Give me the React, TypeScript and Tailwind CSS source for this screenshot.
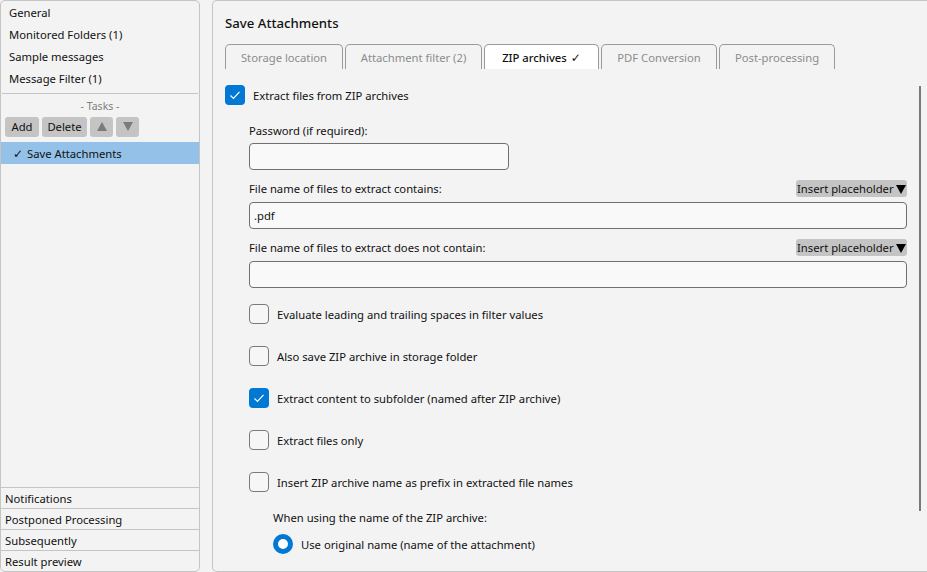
const font = 'font-["Noto_Sans","Open_Sans",sans-serif]';

function Check({ checked }: { checked?: boolean }) {
  if (checked) {
    return (
      <span className="flex h-5 w-5 shrink-0 items-center justify-center rounded-[4px] bg-[#0078d4]">
        <svg width="12" height="12" viewBox="0 0 12 12" fill="none" stroke="white" strokeWidth="1.2">
          <path d="M1.5 6.5 L4.5 9.5 L10.5 2.8" />
        </svg>
      </span>
    );
  }
  return <span className="h-5 w-5 shrink-0 rounded-[4px] border border-[#7a7a7a] bg-[#f6f6f6]" />;
}

function CheckRow({ label, checked, className }: { label: string; checked?: boolean; className?: string }) {
  return (
    <div className={`flex h-5 items-center gap-2 ${className ?? ''}`}>
      <Check checked={checked} />
      <span className="pt-[2px]">{label}</span>
    </div>
  );
}

function Field({ label, value, className }: { label: string; value?: string; className?: string }) {
  return (
    <div className={className}>
      <div className="flex h-[17px] items-center justify-between">
        <span className="pt-[1px]">{label}</span>
        <span className="flex h-[17px] w-[111px] items-center justify-between whitespace-nowrap rounded-[3px] bg-[#c4c4c4] px-[1px]">
          <span className="pt-[1px]">Insert placeholder</span>
          <svg className="mt-[1px]" width="10" height="9" viewBox="0 0 10 9" fill="#000">
            <path d="M0 0 H10 L5 9 Z" />
          </svg>
        </span>
      </div>
      <div className="mt-[5px] flex h-[27px] items-center rounded-[4px] border border-[#707070] bg-[#f9f9f9] px-[4px]">
        {value}
      </div>
    </div>
  );
}

function Tab({ label, width, active, check }: { label: string; width: string; active?: boolean; check?: boolean }) {
  return (
    <div
      className={`flex h-[25px] items-center justify-center gap-[4px] rounded-t-[5px] border border-b-0 border-[#9a9a9a] pt-[2px] ${width} ${
        active ? 'bg-white font-medium text-[#111]' : 'bg-[#f3f3f3] text-[#8c8c8c]'
      }`}
    >
      {label}
      {check && <span className='font-["DejaVu_Sans"] text-[12px]'>✓</span>}
    </div>
  );
}

const topItems = ['General', 'Monitored Folders (1)', 'Sample messages', 'Message Filter (1)'];
const bottomItems = ['Notifications', 'Postponed Processing', 'Subsequently', 'Result preview'];

export default function App() {
  return (
    <div className={`flex h-[572px] w-[927px] gap-3 overflow-hidden bg-[#f3f3f3] text-[11.25px] leading-none text-[#111] ${font}`}>
      {/* sidebar */}
      <aside className="flex h-[572px] w-[200px] shrink-0 flex-col rounded-[5px] border border-[#c4c4c4]">
        <div className="mx-[1px] border-b border-[#c4c4c4] pb-[3px] pl-[7px] pt-[1px]">
          {topItems.map((item) => (
            <div key={item} className="flex h-[22px] items-center">
              {item}
            </div>
          ))}
        </div>
        <div className="mt-[7px] text-center text-[10.5px] text-[#808080]">- Tasks -</div>
        <div className="mt-[5px] flex gap-[3px] pl-[4px]">
          <button className="h-5 w-[34px] rounded-[3px] bg-[#c4c4c4] pt-[1px]">Add</button>
          <button className="h-5 w-[45px] rounded-[3px] bg-[#c4c4c4] pt-[1px]">Delete</button>
          <button className="flex h-5 w-[23px] items-center justify-center rounded-[3px] bg-[#c4c4c4]">
            <svg width="10" height="9" viewBox="0 0 10 9" fill="#7b7b7b">
              <path d="M5 0 L10 9 H0 Z" />
            </svg>
          </button>
          <button className="flex h-5 w-[23px] items-center justify-center rounded-[3px] bg-[#c4c4c4]">
            <svg width="10" height="9" viewBox="0 0 10 9" fill="#7b7b7b">
              <path d="M0 0 H10 L5 9 Z" />
            </svg>
          </button>
        </div>
        <div className="mt-[5px] flex h-[22px] items-center gap-[5px] bg-[#93c1e8] pl-[12px] pt-[2px]">
          <span className='w-[9px] font-["DejaVu_Sans"] text-[12px]'>✓</span>
          <span>Save Attachments</span>
        </div>
        <div className="mt-auto">
          {bottomItems.map((item) => (
            <div key={item} className="flex h-[21px] items-center border-t border-[#c4c4c4] pl-[4px] pt-[2px]">
              {item}
            </div>
          ))}
        </div>
      </aside>

      {/* main panel */}
      <main className="h-[572px] flex-1 rounded-l-[5px] border border-r-0 border-[#c4c4c4] pl-3">
        <h1 className="mt-[14px] flex h-[16px] items-center pt-[1px] text-[13.2px] font-medium">Save Attachments</h1>
        <div className="mt-[13px] flex gap-[2px]">
          <Tab label="Storage location" width="w-[118px]" />
          <Tab label="Attachment filter (2)" width="w-[137px]" />
          <Tab label="ZIP archives" width="w-[115px]" active check />
          <Tab label="PDF Conversion" width="w-[116px]" />
          <Tab label="Post-processing" width="w-[116px]" />
        </div>

        <div className="flex">
          <div className="w-[682px] pt-4">
            <CheckRow label="Extract files from ZIP archives" checked />
            <div className="ml-6 mt-[17px]">
              <div className="flex h-[17px] items-center pt-[1px]">Password (if required):</div>
              <div className="mt-[4px] h-[27px] w-[260px] rounded-[4px] border border-[#707070] bg-[#f9f9f9]" />
              <Field className="mt-[10px]" label="File name of files to extract contains:" value=".pdf" />
              <Field className="mt-[10px]" label="File name of files to extract does not contain:" />
              <CheckRow className="mt-[16px]" label="Evaluate leading and trailing spaces in filter values" />
              <CheckRow className="mt-[22px]" label="Also save ZIP archive in storage folder" />
              <CheckRow className="mt-[22px]" label="Extract content to subfolder (named after ZIP archive)" checked />
              <CheckRow className="mt-[22px]" label="Extract files only" />
              <CheckRow className="mt-[22px]" label="Insert ZIP archive name as prefix in extracted file names" />
              <div className="ml-6 mt-[17px] flex h-[16px] items-center pt-[1px]">When using the name of the ZIP archive:</div>
              <div className="ml-6 mt-[9px] flex h-5 items-center gap-2">
                <span className="h-5 w-5 shrink-0 rounded-full border-[5.5px] border-[#0078d4] bg-white" />
                <span className="pt-[2px]">Use original name (name of the attachment)</span>
              </div>
            </div>
          </div>
          <div className="ml-[12px] mt-[17px] h-[425px] w-[2px] bg-[#7a7a7a]" />
        </div>
      </main>
    </div>
  );
}
